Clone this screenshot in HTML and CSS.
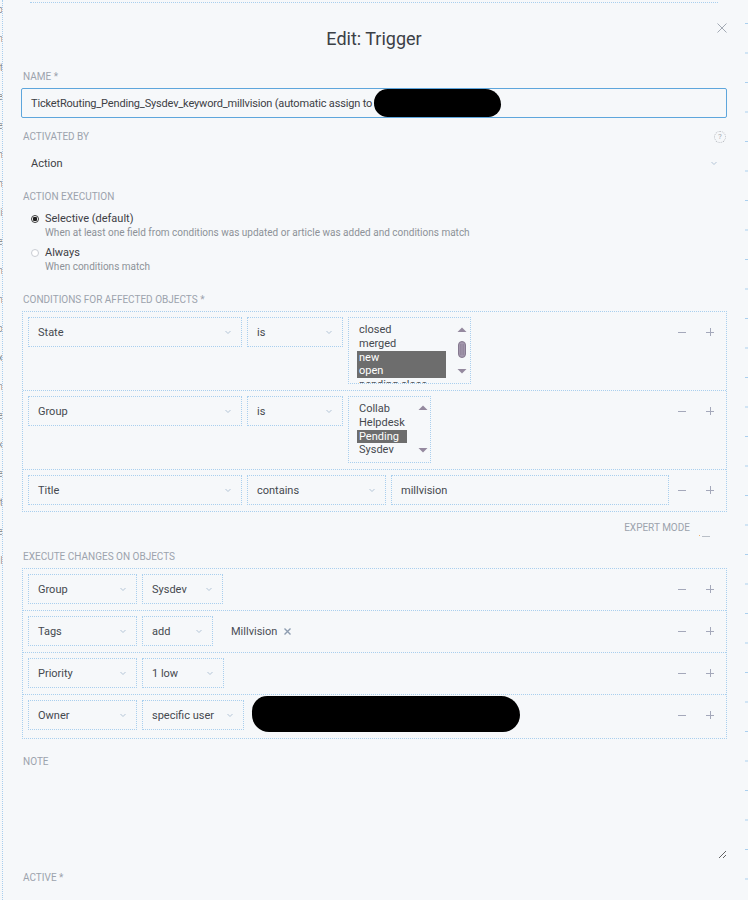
FILE: index.html
```html
<!DOCTYPE html>
<html lang="en">
<head>
<meta charset="utf-8">
<title>Edit: Trigger</title>
<link rel="stylesheet" href="styles.css">
</head>
<body>
<div class="page">
  <aside class="bg-left" aria-hidden="true">
    <span>Tab</span><span>Lorem</span><span>Ticket</span><span>Role</span><span>Name</span><span>Each</span><span>Path</span><span>Hi</span><span>Time</span><span>Sign</span><span>Main</span><span>Todo</span><span>Index</span><span>Item</span><span>Note</span><span>Task</span><span>Page</span><span>Chat</span><span>Core</span><span>Mail</span>
  </aside>

  <main class="modal">
    <div class="top-rule"></div>
    <header class="modal-head">
      <div class="head-spacer"></div>
      <h1 class="modal-title">Edit: Trigger</h1>
      <button class="close" type="button" aria-label="Close">
        <svg width="10" height="10" viewBox="0 0 10 10"><path d="M0.5 0.5L9.5 9.5M9.5 0.5L0.5 9.5" stroke="#a3aab4" stroke-width="1" fill="none"/></svg>
      </button>
    </header>

    <form class="form">
      <div class="group">
        <div class="label">Name *</div>
        <div class="text-input">TicketRouting_Pending_Sysdev_keyword_millvision (automatic assign to<span class="redact-name"></span></div>
      </div>

      <div class="group">
        <div class="label-row">
          <span class="label-inline">Activated by</span>
          <span class="help">?</span>
        </div>
        <div class="plain-select">
          <span>Action</span>
          <svg class="chev" width="6" height="4" viewBox="0 0 6 4"><path d="M0.5 1L3 3.5L5.5 1" stroke="#b3c4d6" fill="none"/></svg>
        </div>
      </div>

      <div class="group">
        <div class="label">Action execution</div>
        <div class="radios">
          <div class="radio-item">
            <span class="radio on"></span>
            <div>
              <div class="radio-title">Selective (default)</div>
              <div class="radio-sub">When at least one field from conditions was updated or article was added and conditions match</div>
            </div>
          </div>
          <div class="radio-item">
            <span class="radio"></span>
            <div>
              <div class="radio-title">Always</div>
              <div class="radio-sub">When conditions match</div>
            </div>
          </div>
        </div>
      </div>

      <div class="group">
        <div class="label">Conditions for affected objects *</div>
        <div class="rows">
          <div class="row">
            <div class="sel w214"><span>State</span><svg class="chev" width="6" height="4" viewBox="0 0 6 4"><path d="M0.5 1L3 3.5L5.5 1" stroke="#b3c4d6" fill="none"/></svg></div>
            <div class="sel w96"><span>is</span><svg class="chev" width="6" height="4" viewBox="0 0 6 4"><path d="M0.5 1L3 3.5L5.5 1" stroke="#b3c4d6" fill="none"/></svg></div>
            <div class="listbox lb-fixed">
              <div class="lb-items">
                <div class="opt">closed</div>
                <div class="opt">merged</div>
                <div class="opt on">new</div>
                <div class="opt on">open</div>
                <div class="opt">pending close</div>
              </div>
              <svg class="lb-scroll" width="24" height="65" viewBox="0 0 24 65">
                <path d="M11.5 14L16 9.5L20.5 14Z" fill="#95899f"/>
                <rect x="12.5" y="23.5" width="7" height="16" rx="3.5" fill="#a397ad" stroke="#85798f"/>
                <path d="M14.5 26V37M16 26V37M17.5 26V37" stroke="#8a7e94" stroke-width="0.6"/>
                <path d="M11.5 51L20.5 51L16 55.5Z" fill="#95899f"/>
              </svg>
            </div>
            <div class="actions">
              <svg width="8" height="8" viewBox="0 0 8 8"><path d="M0 4.5H8" stroke="#a4a8ba"/></svg>
              <svg width="8" height="8" viewBox="0 0 8 8"><path d="M0 4.5H8M4.5 0V8" stroke="#a4a8ba"/></svg>
            </div>
          </div>
          <div class="row">
            <div class="sel w214"><span>Group</span><svg class="chev" width="6" height="4" viewBox="0 0 6 4"><path d="M0.5 1L3 3.5L5.5 1" stroke="#b3c4d6" fill="none"/></svg></div>
            <div class="sel w96"><span>is</span><svg class="chev" width="6" height="4" viewBox="0 0 6 4"><path d="M0.5 1L3 3.5L5.5 1" stroke="#b3c4d6" fill="none"/></svg></div>
            <div class="listbox">
              <div class="lb-items">
                <div class="opt">Collab</div>
                <div class="opt">Helpdesk</div>
                <div class="opt on">Pending</div>
                <div class="opt">Sysdev</div>
              </div>
              <svg class="lb-scroll" width="23" height="65" viewBox="0 0 23 65">
                <path d="M11.5 13L16 8.5L20.5 13Z" fill="#95899f"/>
                <path d="M11.5 51L20.5 51L16 55.5Z" fill="#95899f"/>
              </svg>
            </div>
            <div class="actions">
              <svg width="8" height="8" viewBox="0 0 8 8"><path d="M0 4.5H8" stroke="#a4a8ba"/></svg>
              <svg width="8" height="8" viewBox="0 0 8 8"><path d="M0 4.5H8M4.5 0V8" stroke="#a4a8ba"/></svg>
            </div>
          </div>
          <div class="row">
            <div class="sel w214"><span>Title</span><svg class="chev" width="6" height="4" viewBox="0 0 6 4"><path d="M0.5 1L3 3.5L5.5 1" stroke="#b3c4d6" fill="none"/></svg></div>
            <div class="sel w139"><span>contains</span><svg class="chev" width="6" height="4" viewBox="0 0 6 4"><path d="M0.5 1L3 3.5L5.5 1" stroke="#b3c4d6" fill="none"/></svg></div>
            <div class="sel w278"><span>millvision</span></div>
            <div class="actions">
              <svg width="8" height="8" viewBox="0 0 8 8"><path d="M0 4.5H8" stroke="#a4a8ba"/></svg>
              <svg width="8" height="8" viewBox="0 0 8 8"><path d="M0 4.5H8M4.5 0V8" stroke="#a4a8ba"/></svg>
            </div>
          </div>
        </div>
      </div>

      <div class="expert">
        <span class="label-inline">Expert mode</span>
        <span class="toggle"></span>
      </div>

      <div class="group group-exec">
        <div class="label">Execute changes on objects</div>
        <div class="rows">
          <div class="row">
            <div class="sel w109"><span>Group</span><svg class="chev" width="6" height="4" viewBox="0 0 6 4"><path d="M0.5 1L3 3.5L5.5 1" stroke="#b3c4d6" fill="none"/></svg></div>
            <div class="sel w81"><span>Sysdev</span><svg class="chev" width="6" height="4" viewBox="0 0 6 4"><path d="M0.5 1L3 3.5L5.5 1" stroke="#b3c4d6" fill="none"/></svg></div>
            <div class="actions">
              <svg width="8" height="8" viewBox="0 0 8 8"><path d="M0 4.5H8" stroke="#a4a8ba"/></svg>
              <svg width="8" height="8" viewBox="0 0 8 8"><path d="M0 4.5H8M4.5 0V8" stroke="#a4a8ba"/></svg>
            </div>
          </div>
          <div class="row">
            <div class="sel w109"><span>Tags</span><svg class="chev" width="6" height="4" viewBox="0 0 6 4"><path d="M0.5 1L3 3.5L5.5 1" stroke="#b3c4d6" fill="none"/></svg></div>
            <div class="sel w71"><span>add</span><svg class="chev" width="6" height="4" viewBox="0 0 6 4"><path d="M0.5 1L3 3.5L5.5 1" stroke="#b3c4d6" fill="none"/></svg></div>
            <div class="tag">
              <span>Millvision</span>
              <svg width="7" height="7" viewBox="0 0 7 7"><path d="M0.5 0.5L6.5 6.5M6.5 0.5L0.5 6.5" stroke="#8d9cb0" stroke-width="1.4"/></svg>
            </div>
            <div class="actions">
              <svg width="8" height="8" viewBox="0 0 8 8"><path d="M0 4.5H8" stroke="#a4a8ba"/></svg>
              <svg width="8" height="8" viewBox="0 0 8 8"><path d="M0 4.5H8M4.5 0V8" stroke="#a4a8ba"/></svg>
            </div>
          </div>
          <div class="row">
            <div class="sel w109"><span>Priority</span><svg class="chev" width="6" height="4" viewBox="0 0 6 4"><path d="M0.5 1L3 3.5L5.5 1" stroke="#b3c4d6" fill="none"/></svg></div>
            <div class="sel w82"><span>1 low</span><svg class="chev" width="6" height="4" viewBox="0 0 6 4"><path d="M0.5 1L3 3.5L5.5 1" stroke="#b3c4d6" fill="none"/></svg></div>
            <div class="actions">
              <svg width="8" height="8" viewBox="0 0 8 8"><path d="M0 4.5H8" stroke="#a4a8ba"/></svg>
              <svg width="8" height="8" viewBox="0 0 8 8"><path d="M0 4.5H8M4.5 0V8" stroke="#a4a8ba"/></svg>
            </div>
          </div>
          <div class="row">
            <div class="sel w109"><span>Owner</span><svg class="chev" width="6" height="4" viewBox="0 0 6 4"><path d="M0.5 1L3 3.5L5.5 1" stroke="#b3c4d6" fill="none"/></svg></div>
            <div class="sel w102"><span>specific user</span><svg class="chev" width="6" height="4" viewBox="0 0 6 4"><path d="M0.5 1L3 3.5L5.5 1" stroke="#b3c4d6" fill="none"/></svg></div>
            <div class="redact-owner"></div>
            <div class="actions">
              <svg width="8" height="8" viewBox="0 0 8 8"><path d="M0 4.5H8" stroke="#a4a8ba"/></svg>
              <svg width="8" height="8" viewBox="0 0 8 8"><path d="M0 4.5H8M4.5 0V8" stroke="#a4a8ba"/></svg>
            </div>
          </div>
        </div>
      </div>

      <div class="group group-note">
        <div class="label">Note</div>
        <textarea class="note" aria-label="Note"></textarea>
      </div>

      <div class="group group-active">
        <div class="label">Active *</div>
        <div class="plain-select">
          <span>yes</span>
          <svg class="chev" width="6" height="4" viewBox="0 0 6 4"><path d="M0.5 1L3 3.5L5.5 1" stroke="#b3c4d6" fill="none"/></svg>
        </div>
      </div>
    </form>
  </main>

  <aside class="bg-right" aria-hidden="true"></aside>
</div>
</body>
</html>
```

FILE: styles.css
```css
* { box-sizing: border-box; }

html, body { margin: 0; padding: 0; }

body {
  background: #f6f8fa;
  font-family: Roboto, "Liberation Sans", Arial, sans-serif;
  font-size: 11px;
  color: #43474d;
}

.page {
  display: grid;
  grid-template-columns: 3px 1fr 3px;
  min-height: 960px;
}

/* background page peeking at the left edge */
.bg-left {
  border-right: 1px dotted #a9cfee;
  overflow: hidden;
  display: flex;
  flex-direction: column;
  align-items: flex-end;
  gap: 19px;
  padding-top: 5px;
  font-size: 10px;
  line-height: 10px;
  color: #8c9198;
  white-space: nowrap;
}
.bg-left span { margin-right: -1px; }

/* short ticks at the right edge */
.bg-right {
  background-image: linear-gradient(to bottom, #a9cfee 1px, transparent 1px);
  background-size: 3px 29.5px;
  background-position: 0 23px;
}

.modal {
  padding: 0 18px;
  min-width: 0;
}

.top-rule {
  margin: 2px 9px 0;
  border-top: 1px dotted #a9cfee;
}

.modal-head {
  display: grid;
  grid-template-columns: 1fr auto 1fr;
  margin-top: 20px;
}

.modal-title {
  margin: 0;
  padding-top: 4px;
  font-size: 18px;
  line-height: 24px;
  font-weight: 400;
  color: #3b4046;
  text-align: center;
}

.close {
  justify-self: end;
  align-self: start;
  border: 0;
  padding: 0;
  background: none;
  width: 10px;
  height: 10px;
  display: block;
}
.close svg { display: block; }

.form {
  display: block;
  margin: 0;
  padding-top: 20px;
}

.group + .group { margin-top: 13px; }

.label,
.label-inline {
  display: block;
  font-size: 10px;
  line-height: 12px;
  color: #9ca3ad;
  text-transform: uppercase;
}
.label { margin-bottom: 5px; padding-left: 2px; }

.label-row {
  display: flex;
  justify-content: space-between;
  align-items: center;
  height: 12px;
  margin-bottom: 5px;
  padding-left: 2px;
}

.help {
  width: 12px;
  height: 12px;
  border: 1px dotted #b7bbc0;
  border-radius: 50%;
  font-size: 8px;
  line-height: 10px;
  text-align: center;
  color: #a8acb2;
  margin-right: 1px;
}

.text-input {
  position: relative;
  height: 30px;
  border: 1px solid #5ea6dc;
  border-radius: 2px;
  padding: 0 9px;
  display: flex;
  align-items: center;
  white-space: nowrap;
  overflow: hidden;
  color: #3d4045;
  letter-spacing: -0.17px;
}

.redact-name {
  position: absolute;
  left: 352px;
  top: 0;
  width: 127px;
  height: 28px;
  background: #000;
  border-radius: 14px 16px 13px 14px;
}

.plain-select {
  height: 30px;
  display: flex;
  align-items: center;
  justify-content: space-between;
  padding: 0 10px;
  color: #3d4045;
}

.chev { display: block; flex: none; }

.radios {
  display: flex;
  flex-direction: column;
  gap: 7px;
  padding: 4px 0 8px 10px;
}

.radio-item {
  display: flex;
  align-items: flex-start;
  gap: 6px;
}

.radio {
  flex: none;
  width: 8px;
  height: 8px;
  margin-top: 3px;
  border-radius: 50%;
  border: 1px solid #c9cdd3;
  background: #fff;
}
.radio.on {
  border-color: #3a3a3a;
  background: radial-gradient(circle, #1e1e1e 0 2px, #fff 2.5px);
}

.radio-title {
  font-size: 11px;
  line-height: 14px;
  color: #3d4045;
}

.radio-sub {
  font-size: 10px;
  line-height: 13px;
  color: #8d9298;
}

/* condition / action rows */
.rows {
  margin-left: 1px;
  border: 1px dotted #a9cfee;
}

.row {
  display: flex;
  align-items: flex-start;
  gap: 5px;
  padding: 5px 12px 6px 5px;
}
.row + .row { border-top: 1px dotted #a9cfee; }

.sel {
  flex: none;
  height: 30px;
  border: 1px dotted #a9cfee;
  display: flex;
  align-items: center;
  justify-content: space-between;
  padding: 0 10px 0 9px;
  color: #45494f;
  white-space: nowrap;
}

.w214 { width: 214px; }
.w96 { width: 96px; }
.w139 { width: 139px; }
.w278 { width: 278px; }
.w109 { width: 109px; }
.w81 { width: 81px; }
.w71 { width: 71px; }
.w82 { width: 82px; }
.w102 { width: 102px; }

.listbox {
  flex: none;
  height: 67px;
  border: 1px dotted #a9cfee;
  display: flex;
  padding-left: 8px;
  overflow: hidden;
}
.lb-fixed .lb-items { width: 89px; }

.lb-items {
  padding-top: 5px;
  overflow: hidden;
  height: 65px;
}

.opt {
  padding: 0 2px;
  font-size: 11px;
  line-height: 13.75px;
  color: #45494f;
  white-space: nowrap;
}
.opt.on {
  background: #6d6d6d;
  color: #fff;
}

.lb-scroll { display: block; flex: none; }

.actions {
  margin-left: auto;
  height: 30px;
  display: flex;
  align-items: center;
  gap: 20px;
}
.actions svg { display: block; }

.tag {
  height: 30px;
  display: flex;
  align-items: center;
  gap: 7px;
  padding-left: 13px;
  color: #4a4e55;
}
.tag svg { display: block; }

.redact-owner {
  flex: none;
  width: 268px;
  height: 36px;
  margin: -4px 0 0 3px;
  background: #000;
  border-radius: 16px 20px 18px 18px;
}

.expert {
  display: flex;
  justify-content: flex-end;
  align-items: flex-start;
  gap: 12px;
  height: 12px;
  margin-top: 10px;
  padding-right: 17px;
}

.toggle {
  position: relative;
  width: 8px;
  height: 1px;
  margin-top: 14px;
  background: #b9bfc7;
}
.toggle::before {
  content: "";
  position: absolute;
  left: -3px;
  top: -1px;
  width: 1px;
  height: 1px;
  background: #f2b36b;
}

.group.group-exec { margin-top: 17px; }
.group.group-note { margin-top: 17px; }

.note {
  display: block;
  width: 100%;
  height: 86px;
  border: 0;
  background: transparent;
  resize: vertical;
  font: inherit;
  padding: 6px 10px;
  outline: none;
}
```
